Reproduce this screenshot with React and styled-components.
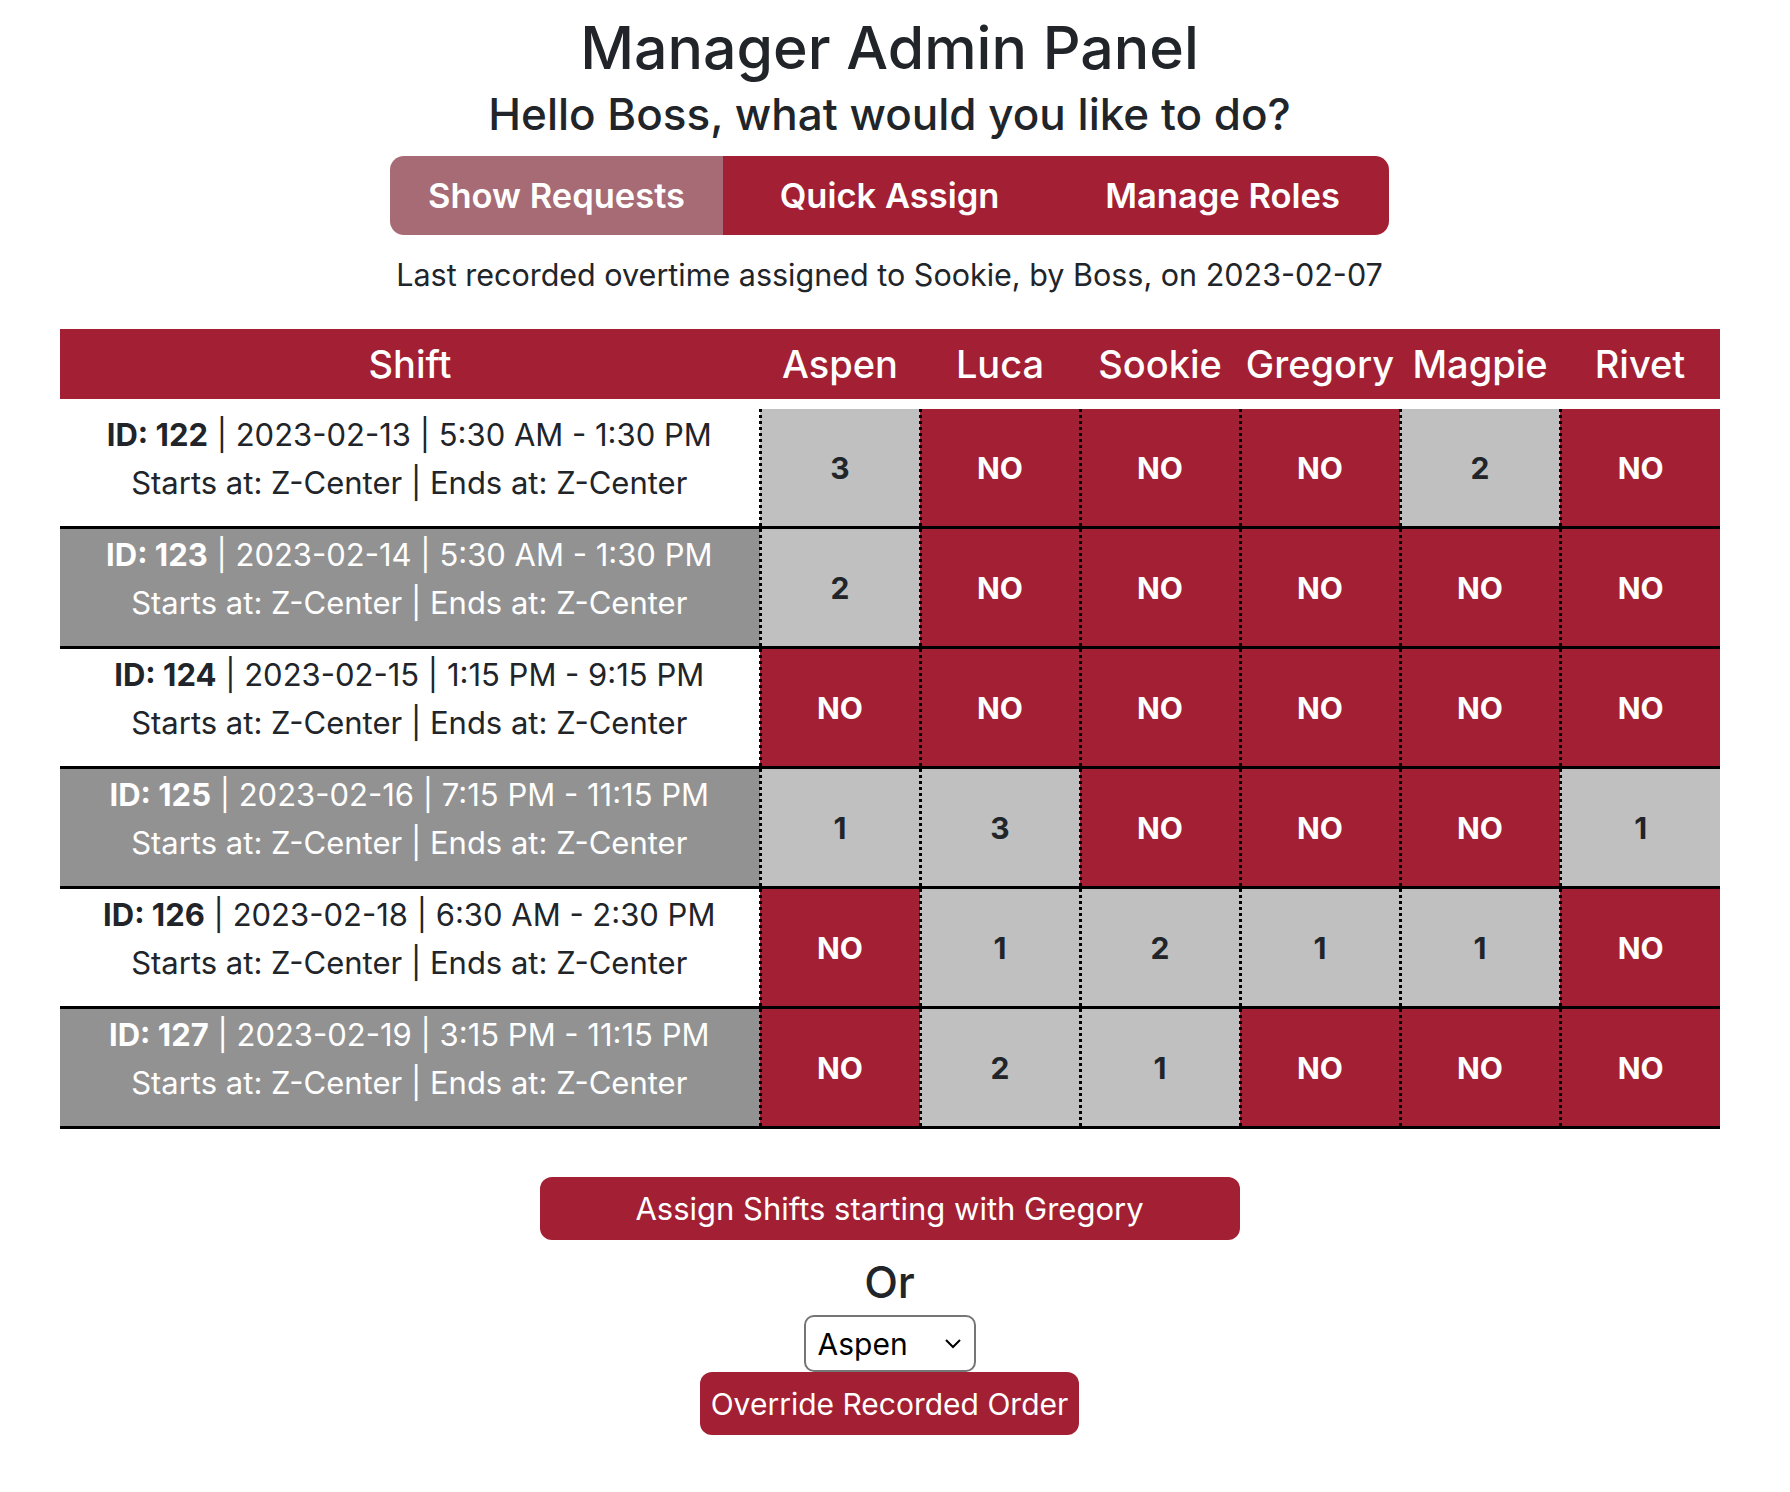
// manager admin panel
import React, { useState } from 'react';
import styled, { createGlobalStyle } from 'styled-components';

const GlobalStyle = createGlobalStyle`
  body {
    margin: 0;
    font-family: Inter, "Noto Sans", sans-serif;
    color: #212529;
    background: #fff;
  }
`;

const RED = '#a31f34';

const Page = styled.div`
  display: flex;
  flex-direction: column;
  align-items: center;
  padding: 0 11px 40px 0;
`;

const Title = styled.h1`
  margin: 13px 0 0;
  font-size: 59px;
  font-weight: 500;
  line-height: 1.2;
`;

const Subtitle = styled.h3`
  margin: 4px 0 0;
  font-size: 44px;
  font-weight: 500;
  line-height: 1.2;
`;

const ButtonGroup = styled.div`
  display: flex;
  margin-top: 15px;
  border-radius: 14px;
  overflow: hidden;
`;

const GroupButton = styled.button`
  width: 333px;
  height: 79px;
  border: none;
  font-family: inherit;
  font-size: 34.5px;
  font-weight: 600;
  color: #fff;
  background: ${p => (p.$active ? '#a66b75' : RED)};
  cursor: pointer;
`;

const LastNote = styled.p`
  margin: 17px 0 0;
  font-size: 30.5px;
  line-height: 1.5;
`;

const Table = styled.table`
  align-self: flex-start;
  margin: 32px 0 0 60px;
  width: 1660px;
  table-layout: fixed;
  border-collapse: collapse;
`;

const HeadCell = styled.th`
  height: 70px;
  padding: 0;
  background: ${RED};
  color: #fff;
  font-size: 38px;
  font-weight: 500;
  border-bottom: 10px solid #fff;
`;

const Row = styled.tr`
  border-bottom: 3px solid #000;
`;

const ShiftCell = styled.td`
  height: 99px;
  padding: 0 8px 18px;
  text-align: center;
  font-size: 31px;
  line-height: 48px;
  background: ${p => (p.$shaded ? '#929292' : '#fff')};
  color: ${p => (p.$shaded ? '#fff' : '#212529')};
`;

const ValueCell = styled.td`
  padding: 0;
  text-align: center;
  font-size: 30px;
  font-weight: 700;
  border-left: 3px dotted #000;
  background: ${p => (p.$no ? RED : '#c0c0c0')};
  color: ${p => (p.$no ? '#fff' : '#212529')};
`;

const AssignButton = styled.button`
  margin-top: 48px;
  width: 700px;
  height: 63px;
  border: none;
  border-radius: 12px;
  background: ${RED};
  color: #fff;
  font-family: inherit;
  font-size: 31px;
`;

const OrLabel = styled.h3`
  margin: 16px 0 0;
  font-size: 44px;
  font-weight: 500;
  line-height: 1.2;
`;

const SelectWrap = styled.div`
  position: relative;
  margin-top: 6px;
`;

const Select = styled.select`
  appearance: none;
  width: 172px;
  height: 57px;
  padding: 0 40px 0 12px;
  border: 2px solid #767676;
  border-radius: 10px;
  background: #fff;
  font-family: inherit;
  font-size: 30px;
  color: #000;
`;

const Chevron = styled.svg`
  position: absolute;
  right: 14px;
  top: 22px;
  pointer-events: none;
`;

const OverrideButton = styled.button`
  height: 63px;
  padding: 0 11px;
  border: none;
  border-radius: 12px;
  background: ${RED};
  color: #fff;
  font-family: inherit;
  font-size: 30px;
`;

const names = ['Aspen', 'Luca', 'Sookie', 'Gregory', 'Magpie', 'Rivet'];

const shifts = [
  { id: 122, date: '2023-02-13', time: '5:30 AM - 1:30 PM', vals: [3, 'NO', 'NO', 'NO', 2, 'NO'] },
  { id: 123, date: '2023-02-14', time: '5:30 AM - 1:30 PM', vals: [2, 'NO', 'NO', 'NO', 'NO', 'NO'] },
  { id: 124, date: '2023-02-15', time: '1:15 PM - 9:15 PM', vals: ['NO', 'NO', 'NO', 'NO', 'NO', 'NO'] },
  { id: 125, date: '2023-02-16', time: '7:15 PM - 11:15 PM', vals: [1, 3, 'NO', 'NO', 'NO', 1] },
  { id: 126, date: '2023-02-18', time: '6:30 AM - 2:30 PM', vals: ['NO', 1, 2, 1, 1, 'NO'] },
  { id: 127, date: '2023-02-19', time: '3:15 PM - 11:15 PM', vals: ['NO', 2, 1, 'NO', 'NO', 'NO'] },
];

export default function App() {
  const [tab, setTab] = useState('requests');
  const [start, setStart] = useState('Aspen');

  return (
    <Page>
      <GlobalStyle />
      <Title>Manager Admin Panel</Title>
      <Subtitle>Hello Boss, what would you like to do?</Subtitle>
      <ButtonGroup>
        <GroupButton $active={tab === 'requests'} onClick={() => setTab('requests')}>Show Requests</GroupButton>
        <GroupButton $active={tab === 'assign'} onClick={() => setTab('assign')}>Quick Assign</GroupButton>
        <GroupButton $active={tab === 'roles'} onClick={() => setTab('roles')}>Manage Roles</GroupButton>
      </ButtonGroup>
      <LastNote>Last recorded overtime assigned to Sookie, by Boss, on 2023-02-07</LastNote>

      <Table>
        <colgroup>
          <col style={{ width: 700 }} />
          {names.map(n => <col key={n} style={{ width: 160 }} />)}
        </colgroup>
        <thead>
          <tr>
            <HeadCell>Shift</HeadCell>
            {names.map(n => <HeadCell key={n}>{n}</HeadCell>)}
          </tr>
        </thead>
        <tbody>
          {shifts.map((s, i) => (
            <Row key={s.id}>
              <ShiftCell $shaded={i % 2 === 1}>
                <b>ID: {s.id}</b> | {s.date} | {s.time}
                <br />
                Starts at: Z-Center | Ends at: Z-Center
              </ShiftCell>
              {s.vals.map((v, j) => (
                <ValueCell key={j} $no={v === 'NO'}>{v}</ValueCell>
              ))}
            </Row>
          ))}
        </tbody>
      </Table>

      <AssignButton>Assign Shifts starting with Gregory</AssignButton>
      <OrLabel>Or</OrLabel>
      <SelectWrap>
        <Select value={start} onChange={e => setStart(e.target.value)}>
          {names.map(n => <option key={n}>{n}</option>)}
        </Select>
        <Chevron width="18" height="12" viewBox="0 0 18 12">
          <path d="M2 3 L9 10 L16 3" fill="none" stroke="#000" strokeWidth="2" />
        </Chevron>
      </SelectWrap>
      <OverrideButton>Override Recorded Order</OverrideButton>
    </Page>
  );
}
